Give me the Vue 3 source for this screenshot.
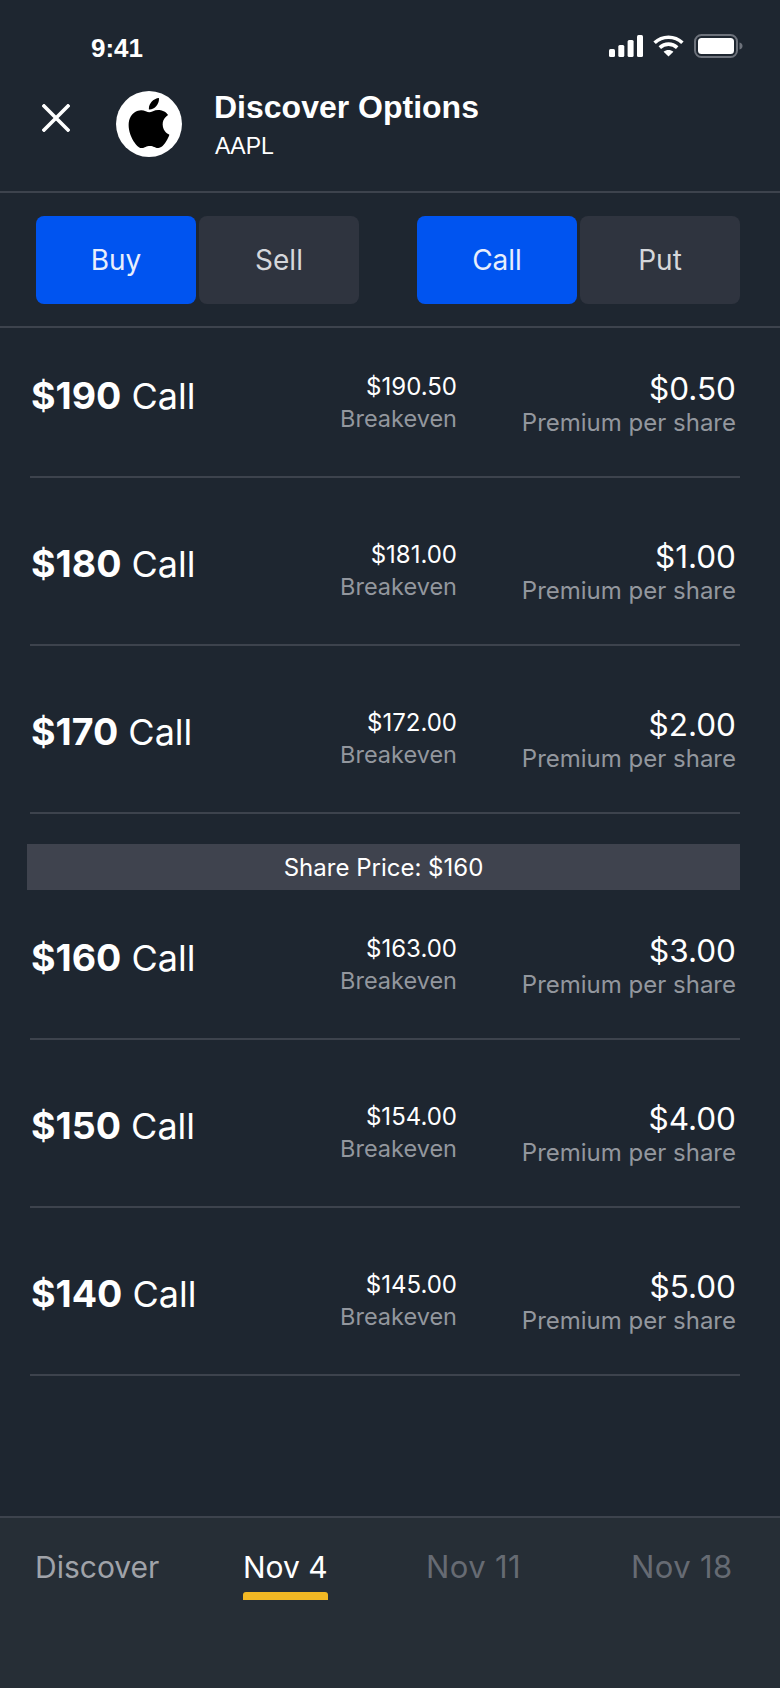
<script setup>
const upperRows = [
  { strike: '$190', breakeven: '$190.50', premium: '$0.50', tight: true },
  { strike: '$180', breakeven: '$181.00', premium: '$1.00' },
  { strike: '$170', breakeven: '$172.00', premium: '$2.00' }
]

const lowerRows = [
  { strike: '$160', breakeven: '$163.00', premium: '$3.00', tight: true },
  { strike: '$150', breakeven: '$154.00', premium: '$4.00' },
  { strike: '$140', breakeven: '$145.00', premium: '$5.00' }
]

const tabs = [
  { label: 'Discover', tone: 'muted' },
  { label: 'Nov 4', tone: 'active' },
  { label: 'Nov 11', tone: 'dim' },
  { label: 'Nov 18', tone: 'dim' }
]
</script>

<template>
  <div class="screen">
    <div class="status-bar">
      <span class="status-bar__time">9:41</span>
      <div class="status-bar__icons">
        <svg width="34" height="22" viewBox="0 0 34 22" fill="#fff">
          <rect x="0" y="14" width="6" height="8" rx="1.5" />
          <rect x="9.3" y="10" width="6" height="12" rx="1.5" />
          <rect x="18.6" y="5" width="6" height="17" rx="1.5" />
          <rect x="28" y="0" width="6" height="22" rx="1.5" />
        </svg>
        <svg width="31" height="22" viewBox="0 0 31 22" fill="none" stroke="#fff" stroke-width="3.6">
          <path d="M1.6 7.8C9.4 0.4 21.6 0.4 29.4 7.8" />
          <path d="M6.8 12.6C11.8 8 19.2 8 24.2 12.6" />
          <path d="M15.5 21.6 10.6 16.8C13.4 14.4 17.6 14.4 20.4 16.8Z" fill="#fff" stroke="none" />
        </svg>
        <svg width="49" height="24" viewBox="0 0 49 24" fill="none">
          <rect x="1" y="1" width="42" height="22" rx="6.5" stroke="#6d727b" stroke-width="2" />
          <rect x="4" y="4" width="36" height="16" rx="3.5" fill="#fff" />
          <path d="M45.5 8.5C47.5 9 48.5 10.4 48.5 12C48.5 13.6 47.5 15 45.5 15.5Z" fill="#6d727b" />
        </svg>
      </div>
    </div>

    <header class="top-bar">
      <svg class="top-bar__close" width="28" height="28" viewBox="0 0 28 28" stroke="#fff" stroke-width="3.6" stroke-linecap="square">
        <path d="M2 2 26 26M26 2 2 26" />
      </svg>
      <div class="top-bar__logo">
        <svg width="50" height="50" viewBox="0 0 24 24" fill="#000">
          <path d="M12.152 6.896c-.948 0-2.415-1.078-3.96-1.04-2.04.027-3.91 1.183-4.961 3.014-2.117 3.675-.546 9.103 1.519 12.09 1.013 1.454 2.208 3.09 3.792 3.039 1.52-.065 2.09-.987 3.935-.987 1.831 0 2.35.987 3.96.948 1.637-.026 2.676-1.48 3.676-2.948 1.156-1.688 1.636-3.325 1.662-3.415-.039-.013-3.182-1.221-3.22-4.857-.026-3.04 2.48-4.494 2.597-4.559-1.429-2.09-3.623-2.324-4.39-2.376-2-.156-3.675 1.09-4.61 1.09zM15.53 3.83c.843-1.012 1.4-2.427 1.245-3.83-1.207.052-2.662.805-3.532 1.818-.78.896-1.454 2.338-1.273 3.714 1.338.104 2.715-.688 3.559-1.701" />
        </svg>
      </div>
      <div class="top-bar__text">
        <b>Discover Options</b>
        <span>AAPL</span>
      </div>
    </header>

    <div class="toggles">
      <div class="toggle">
        <button class="toggle__btn active" type="button">Buy</button>
        <button class="toggle__btn" type="button">Sell</button>
      </div>
      <div class="toggle">
        <button class="toggle__btn active" type="button">Call</button>
        <button class="toggle__btn" type="button">Put</button>
      </div>
    </div>

    <main class="chain">
      <div
        v-for="row in upperRows"
        :key="row.strike"
        class="chain-row"
        :class="{ tight: row.tight }"
      >
        <div class="chain-row__strike"><b>{{ row.strike }}</b> Call</div>
        <div class="chain-row__breakeven">
          <span>{{ row.breakeven }}</span>
          <small>Breakeven</small>
        </div>
        <div class="chain-row__premium">
          <span>{{ row.premium }}</span>
          <small>Premium per share</small>
        </div>
      </div>

      <div class="share-price">Share Price: $160</div>

      <div
        v-for="row in lowerRows"
        :key="row.strike"
        class="chain-row"
        :class="{ tight: row.tight }"
      >
        <div class="chain-row__strike"><b>{{ row.strike }}</b> Call</div>
        <div class="chain-row__breakeven">
          <span>{{ row.breakeven }}</span>
          <small>Breakeven</small>
        </div>
        <div class="chain-row__premium">
          <span>{{ row.premium }}</span>
          <small>Premium per share</small>
        </div>
      </div>
    </main>

    <nav class="tabs">
      <div v-for="tab in tabs" :key="tab.label" class="tab" :class="tab.tone">
        {{ tab.label }}
      </div>
    </nav>
  </div>
</template>

<style scoped>
.screen {
  width: 780px;
  height: 1688px;
  display: flex;
  flex-direction: column;
  overflow: hidden;
  background: #1e2630;
  color: #fff;
  font-family: Inter, "Noto Sans", sans-serif;
}

.status-bar {
  height: 91px;
  flex: none;
  box-sizing: border-box;
  padding: 33px 37px 0 91px;
  display: flex;
  justify-content: space-between;
  align-items: flex-start;
}

.status-bar__time {
  font-family: "Liberation Sans", Arial, sans-serif;
  font-size: 26px;
  font-weight: 700;
  line-height: 30px;
}

.status-bar__icons {
  display: flex;
  align-items: center;
  gap: 10px;
  margin-top: 1px;
  padding-left: 2px;
}

.top-bar {
  height: 102px;
  flex: none;
  box-sizing: border-box;
  padding-left: 42px;
  display: flex;
  align-items: flex-start;
  border-bottom: 2px solid #3d434d;
}

.top-bar__close {
  margin-top: 13px;
  flex: none;
}

.top-bar__logo {
  width: 66px;
  height: 66px;
  margin-left: 46px;
  flex: none;
  border-radius: 50%;
  background: #fff;
  display: grid;
  place-items: center;
}

.top-bar__logo svg {
  margin-top: -2px;
}

.top-bar__text {
  margin-left: 32px;
  margin-top: -2px;
  display: flex;
  flex-direction: column;
  font-family: "Liberation Sans", Arial, sans-serif;
}

.top-bar__text b {
  font-size: 32px;
  line-height: 36px;
}

.top-bar__text span {
  margin: 7px 0 0 1px;
  font-size: 23px;
  line-height: 28px;
}

.toggles {
  height: 135px;
  flex: none;
  box-sizing: border-box;
  padding: 23px 40px 0 36px;
  display: flex;
  justify-content: space-between;
  border-bottom: 2px solid #3d434d;
}

.toggle {
  display: flex;
  gap: 3px;
}

.toggle__btn {
  width: 160px;
  height: 88px;
  padding: 0;
  border: 0;
  border-radius: 8px;
  background: #2f343f;
  color: #d5d7db;
  font-family: inherit;
  font-size: 28px;
}

.toggle__btn.active {
  background: #0054f0;
  color: #e8eefc;
}

.chain {
  flex: 1;
  padding: 0 40px 0 30px;
}

.chain-row {
  height: 168px;
  box-sizing: border-box;
  padding-top: 60px;
  border-bottom: 2px solid #3d434d;
  display: grid;
  grid-template-columns: 1fr 190px 283px;
  align-items: start;
}

.chain-row.tight {
  height: 150px;
  padding-top: 42px;
}

.chain-row__strike {
  padding: 5px 0 0 1px;
  font-size: 36px;
  line-height: 42px;
  white-space: nowrap;
}

.chain-row__strike b {
  font-size: 37.5px;
  font-weight: 700;
}

.chain-row__breakeven,
.chain-row__premium {
  display: flex;
  flex-direction: column;
  align-items: flex-end;
  white-space: nowrap;
}

.chain-row__breakeven {
  padding-top: 1px;
}

.chain-row__premium {
  padding-right: 4px;
}

.chain-row__breakeven span {
  font-size: 24px;
  line-height: 32px;
}

.chain-row__breakeven small {
  color: #93979e;
  font-size: 23.5px;
  line-height: 32px;
}

.chain-row__premium span {
  font-size: 31.5px;
  line-height: 38px;
}

.chain-row__premium small {
  color: #93979e;
  font-size: 24px;
  line-height: 30px;
}

.share-price {
  height: 46px;
  margin: 30px 0 0 -3px;
  background: #3f434e;
  display: grid;
  place-items: center;
  font-size: 24px;
}

.tabs {
  height: 172px;
  flex: none;
  box-sizing: border-box;
  padding: 27px 0 0 35px;
  display: grid;
  grid-template-columns: 208px 183px 205px auto;
  align-items: start;
  border-top: 2px solid #3d434d;
  background: #262e36;
  font-size: 30px;
}

.tab {
  line-height: 44px;
  width: fit-content;
}

.tab.muted {
  color: #a0a3a9;
}

.tab.dim {
  color: #666b73;
  font-size: 31px;
  letter-spacing: 0.4px;
}

.tab.active {
  color: #fff;
}

.tab.active::after {
  content: "";
  display: block;
  height: 8px;
  margin-top: 3px;
  border-radius: 3px 3px 0 0;
  background: #f2b824;
}
</style>

<style>
html,
body {
  margin: 0;
  background: #1e2630;
}
</style>
